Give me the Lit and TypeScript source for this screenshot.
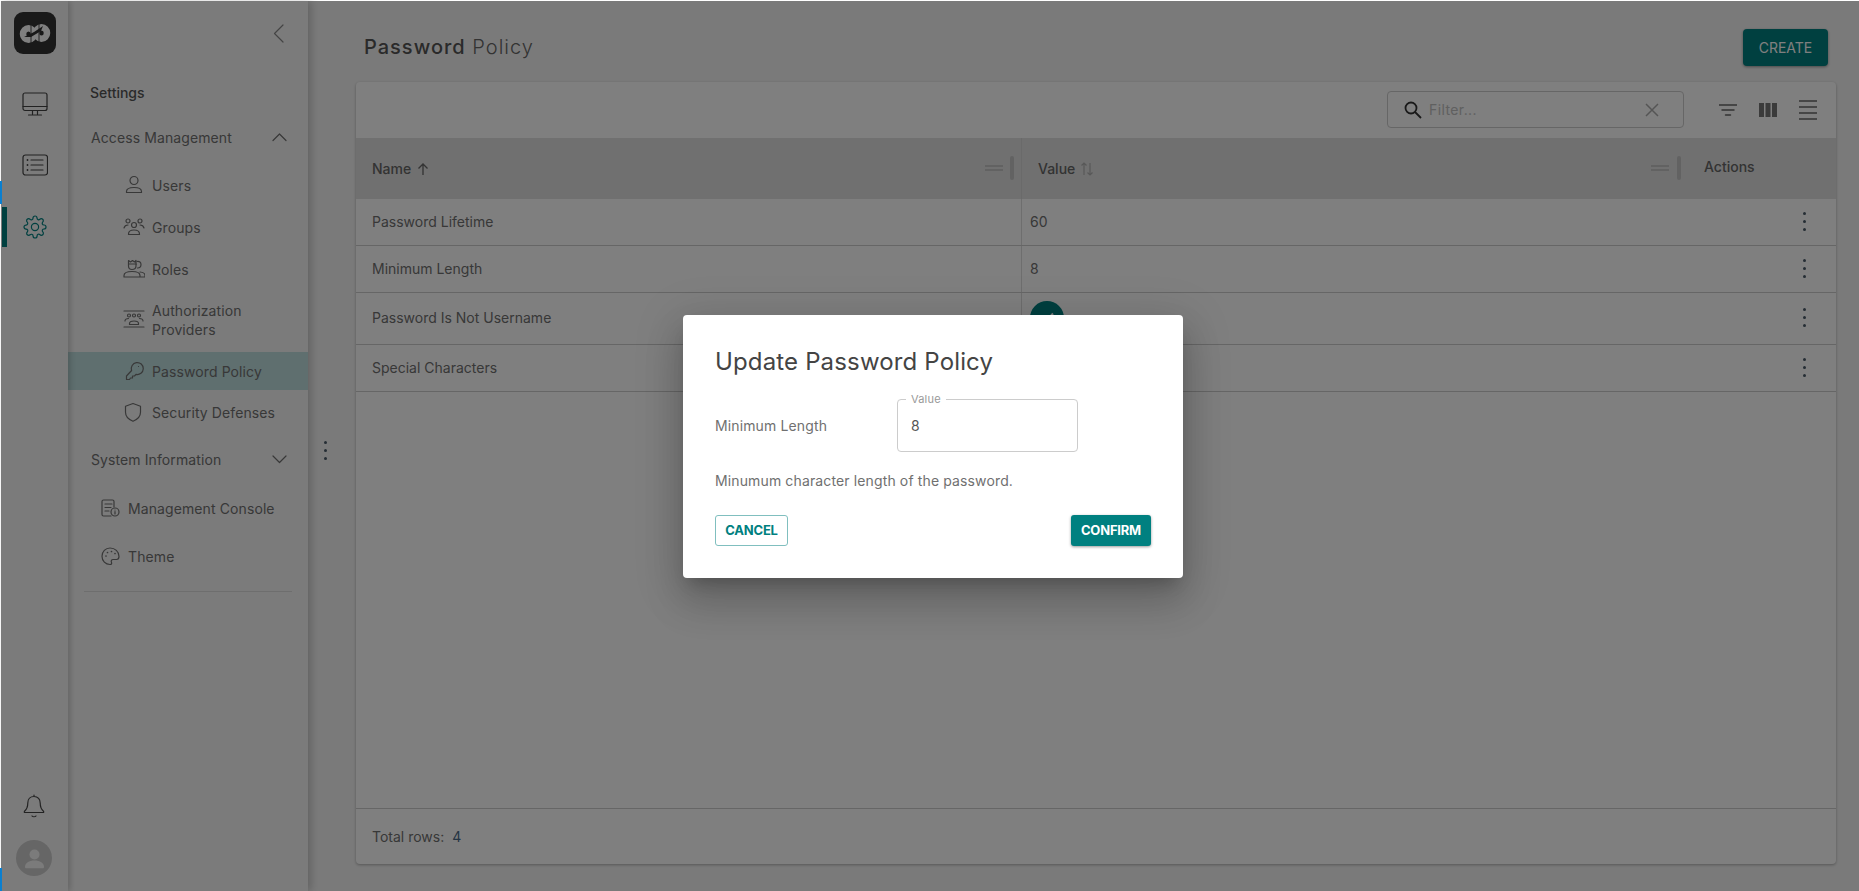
import { LitElement, html, css, svg } from 'lit'
import { customElement } from 'lit/decorators.js'

const line = (body: unknown, w = 24, h = 24, cls = '') => html`<svg class="ico ${cls}" width=${w} height=${h} viewBox="0 0 ${w} ${h}" fill="none" stroke="currentColor" stroke-width="1.2" stroke-linecap="round" stroke-linejoin="round">${body}</svg>`

const gear = svg`<circle cx="12" cy="12" r="3.6"/><path d="M19.4 15a1.65 1.65 0 0 0 .33 1.82l.06.06a2 2 0 0 1 0 2.83 2 2 0 0 1-2.83 0l-.06-.06a1.65 1.65 0 0 0-1.82-.33 1.65 1.65 0 0 0-1 1.51V21a2 2 0 0 1-2 2 2 2 0 0 1-2-2v-.09A1.65 1.65 0 0 0 9 19.4a1.65 1.65 0 0 0-1.82.33l-.06.06a2 2 0 0 1-2.83 0 2 2 0 0 1 0-2.83l.06-.06a1.65 1.65 0 0 0 .33-1.82 1.65 1.65 0 0 0-1.51-1H3a2 2 0 0 1-2-2 2 2 0 0 1 2-2h.09A1.65 1.65 0 0 0 4.6 9a1.65 1.65 0 0 0-.33-1.82l-.06-.06a2 2 0 0 1 0-2.83 2 2 0 0 1 2.83 0l.06.06a1.65 1.65 0 0 0 1.82.33H9a1.65 1.65 0 0 0 1-1.51V3a2 2 0 0 1 2-2 2 2 0 0 1 2 2v.09a1.65 1.65 0 0 0 1 1.51 1.65 1.65 0 0 0 1.82-.33l.06-.06a2 2 0 0 1 2.83 0 2 2 0 0 1 0 2.83l-.06.06a1.65 1.65 0 0 0-.33 1.82V9a1.65 1.65 0 0 0 1.51 1H21a2 2 0 0 1 2 2 2 2 0 0 1-2 2h-.09a1.65 1.65 0 0 0-1.51 1z"/>`

const monitor = svg`<rect x="1" y="1" width="24" height="17.5" rx="2"/><path d="M1 14.5h24M10.5 18.5v3.5M15.5 18.5v3.5M6.5 23h13"/>`
const list = svg`<rect x="1" y="1" width="24.5" height="20" rx="2.5"/><path d="M9 6h12M9 11h12M9 16h12"/><path stroke-width="1.8" d="M5.5 6h.01M5.5 11h.01M5.5 16h.01"/>`
const bell = svg`<path d="M11 1v1.5M11 2.5c-4 0-6.2 3-6.2 6.5 0 4.2-1 6.300-3.300 8.300-.6.6-.2 1.200.5 1.200h18c.7 0 1.100-.6.5-1.200-2.300-2-3.300-4.100-3.300-8.300 0-3.500-2.200-6.500-6.200-6.500zM9 22c.8 1 3.200 1 4 0"/>`

const user = svg`<circle cx="11" cy="5.500" r="4"/><path d="M3.500 17.500v-1c0-2.500 2.500-4 7.500-4s7.500 1.500 7.500 4v1z"/>`
const groups = svg`<circle cx="5" cy="4" r="2"/><circle cx="17" cy="4" r="2"/><circle cx="11" cy="8" r="2.500"/><path d="M1 11c.5-2 2-3 4-3M21 11c-.5-2-2-3-4-3M5.500 17.500v-.5c0-2.500 2-4 5.500-4s5.500 1.500 5.500 4v.5z"/>`
const roles = svg`<path d="M5.500 1.500l2 1.500 2-1.500 2 1.500 1.500-1.500V7c0 2-1.500 3.500-4 3.500S5.500 9 5.500 7zM5.500 5h8"/><path d="M14 2.500c2.500-.5 4 1 4 3s-1.500 3.500-3.500 3.500M1 18v-1.500c0-2.500 3-4 8-4s8 1.500 8 4V18zM17 13c3 .2 5 1.500 5 3.500V18h-5"/>`
const auth = svg`<path d="M1 1h20M1 17h20"/><circle cx="6" cy="5.500" r="1.500"/><circle cx="11" cy="5.500" r="1.500"/><circle cx="16" cy="5.500" r="1.500"/><path d="M2 11c0-1.500 1.500-2.500 3.500-2.500M20 11c0-1.500-1.500-2.500-3.500-2.500M6.500 14.500v-1c0-1.500 2-2.500 4.500-2.500s4.500 1 4.500 2.500v1z"/>`
const key = svg`<path d="M8.600 9.500A6 6 0 1 1 13 13.400L11.500 15H9.500v2H7.500l-1 1.500H3.500V15zM15.500 5.500h.01"/>`
const shield = svg`<path d="M10 1.500l7.500 2.800v6c0 4.200-3 7.200-7.500 9-4.500-1.800-7.500-4.800-7.500-9v-6z"/>`
const docInfo = svg`<path d="M11 17H3.500c-1 0-1.500-.5-1.500-1.500V2.500C2 1.500 2.500 1 3.500 1h9c1 0 1.500.5 1.500 1.500V8M5 5h7M5 8.500h6M5 12h4"/><circle cx="15" cy="13" r="4"/><path d="M15 12.500v2.500M15 11h.01"/>`
const palette = svg`<path d="M9 1C4.500 1 1 4.700 1 9.300 1 14 4.500 17.500 9 17.500c1.500 0 2-1 1.500-2-.7-1.300-.1-3 1.500-3h3.500c1.500 0 2.500-1.200 2.500-3C18 4.500 14 1 9 1z"/><path stroke-width="1.700" d="M5 9h.01M6.500 5.500h.01M10.500 4.500h.01M14 6.500h.01"/>`

const bars = (y: number[], x1: number[], x2: number[]) => svg`${y.map((v, i) => svg`<path d="M${x1[i]} ${v}H${x2[i]}"/>`)}`

type Item = { label: string[]; icon: unknown; on?: boolean }

const accessItems: Item[] = [
  { label: ['Users'], icon: user },
  { label: ['Groups'], icon: groups },
  { label: ['Roles'], icon: roles },
  { label: ['Authorization', 'Providers'], icon: auth },
  { label: ['Password Policy'], icon: key, on: true },
  { label: ['Security Defenses'], icon: shield },
]

const rows = [
  { name: 'Password Lifetime', value: '60' },
  { name: 'Minimum Length', value: '8' },
  { name: 'Password Is Not Username', check: true },
  { name: 'Special Characters', value: '' },
]

const kebab = html`<span class="kebab"><i></i><i></i><i></i></span>`

@customElement('app-root')
export class AppRoot extends LitElement {
  static styles = css`
    :host {
      display: block;
      height: 100vh;
      overflow: hidden;
      font-family: Inter, "Liberation Sans", sans-serif;
      color: #666;
      background: #fff;
    }
    * { box-sizing: border-box; }
    .frame { position: relative; display: flex; height: 100%; padding: 1px 0 0 1px; }
    .edge { position: absolute; left: 0; width: 2px; background: #0a7fd0; z-index: 11; }
    .edge.a { top: 181px; height: 23px; }
    .edge.b { top: 868px; height: 23px; }
    .ico { display: block; flex: none; }

    .rail {
      flex: none;
      width: 67px;
      display: flex;
      flex-direction: column;
      align-items: center;
      padding-top: 11px;
      background: #f7f7f7;
      box-shadow: 2px 0 6px rgba(0,0,0,.2);
      z-index: 3;
      color: #444;
    }
    .logo { width: 42px; height: 42px; border-radius: 9px; background: #333; }
    .logo svg { display: block; }
    .rail-btn { position: relative; width: 67px; display: flex; justify-content: center; }
    .rail-btn.monitor { margin-top: 38px; }
    .rail-btn.list { margin-top: 38px; }
    .rail-btn.gear { margin-top: 39px; color: #008080; }
    .rail-btn.gear::before {
      content: '';
      position: absolute;
      left: 1px;
      top: -8px;
      width: 5px;
      height: 40px;
      background: #008080;
    }
    .spacer { flex: 1; }
    .bell { margin-bottom: 22px; padding-right: 2px; }
    .avatar { width: 36px; height: 36px; margin-bottom: 15px; margin-right: 2px; border-radius: 50%; background: #ccc; overflow: hidden; }

    .nav {
      flex: none;
      width: 240px;
      background: #f7f7f7;
      box-shadow: 3px 0 8px rgba(0,0,0,.2);
      z-index: 2;
      position: relative;
      color: #707070;
      font-size: 14px;
      letter-spacing: .1px;
    }
    .collapse { position: absolute; right: 23px; top: 23px; color: #888; }
    .handle { position: absolute; right: -19px; top: 440px; }
    .settings { padding: 82px 0 0 22px; font-weight: 500; line-height: 20px; color: #555; letter-spacing: 0; height: 118px; }
    .group { display: flex; align-items: center; justify-content: space-between; height: 36px; padding: 0 21px 0 23px; }
    .items { display: flex; flex-direction: column; gap: 4px; padding-top: 11px; }
    .item { display: flex; align-items: center; min-height: 38px; padding-left: 55px; gap: 7px; line-height: 19px; }
    .item .slot { width: 22px; display: flex; justify-content: center; flex: none; }
    .item.on { background: #bedede; margin-bottom: -1px; }
    .item.tall { height: 56px; }
    .group.second { margin-top: 10px; }
    .plain { display: flex; align-items: center; height: 38px; padding-left: 32px; gap: 8px; }
    .plain .slot { width: 20px; flex: none; display: flex; justify-content: center; }
    .plain-list { display: flex; flex-direction: column; gap: 9px; padding-top: 12px; }
    .plain:last-child { margin-top: 1px; }
    .divider { height: 1px; background: #ddd; margin: 16px 16px 0; }

    .main { flex: 1; min-width: 0; display: flex; flex-direction: column; padding: 0 23px 27px 48px; background: #f5f5f5; }
    .head { flex: none; height: 81px; display: flex; align-items: center; justify-content: space-between; padding: 12px 8px 0 8px; }
    .title { font-size: 20px; letter-spacing: 1px; font-weight: 300; color: #666; margin-bottom: 2px; }
    .title b { font-weight: 500; color: #555; }
    .create {
      width: 85px;
      height: 37px;
      border: 0;
      border-radius: 4px;
      background: #008080;
      color: #fff;
      font: 400 14px Inter, sans-serif;
      box-shadow: 0 1px 3px rgba(0,0,0,.4);
    }

    .card { flex: 1; display: flex; flex-direction: column; background: #fff; border-radius: 4px; box-shadow: 0 1px 3px rgba(0,0,0,.3); font-size: 14px; }
    .bar { flex: none; height: 56px; padding-bottom: 1px; display: flex; align-items: center; }
    .filter {
      margin-left: 1031px;
      width: 297px;
      height: 37px;
      display: flex;
      align-items: center;
      padding-left: 16px;
      border: 1px solid #ccc;
      border-radius: 4px;
      color: #c0c0c0;
      gap: 7px;
    }
    .filter .txt { flex: 1; letter-spacing: .4px; }
    .filter .x { margin-right: 24px; color: #aaa; }
    .tools { display: flex; align-items: center; color: #666; }
    .tool { width: 40px; display: flex; justify-content: center; }
    .tool .ico { stroke-width: 1.5; }
    .tools .tool:first-child { margin-left: 24px; }

    .thead, .tr { display: grid; grid-template-columns: 666px 665px 1fr; }
    .thead { flex: none; height: 61px; background: #e0e0e0; font-weight: 500; color: #666; }
    .th { display: flex; align-items: center; padding-left: 16px; position: relative; }
    .th:first-child { border-right: 1px solid #d4d4d4; }
    .th.act { padding-left: 17px; padding-bottom: 4px; align-items: center; }
    .sort { margin-left: 5px; color: #666; }
    .sort.off { color: #b0b0b0; }
    .grip { position: absolute; right: 18px; top: 27px; width: 18px; height: 6px; border-top: 2px solid #c4c4c4; border-bottom: 2px solid #c4c4c4; }
    .sep { position: absolute; right: 7px; top: 18px; width: 4px; height: 24px; border-radius: 2px; background: #c4c4c4; }
    .th.val .grip { right: 18px; }
    .th.val .sep { right: 6px; }
    .tr { border-bottom: 1px solid #ccc; min-height: 47px; align-items: stretch; color: #707070; }
    .td { display: flex; align-items: center; padding: 0 0 2px 16px; }
    .td:first-child { border-right: 1px solid #ddd; }
    .td.v { padding-left: 8px; }
    .td.a { justify-content: flex-end; padding-right: 30px; }
    .check { width: 34px; height: 34px; margin: 8px 0 7px; border-radius: 50%; background: #008080; display: flex; align-items: center; justify-content: center; color: #fff; }
    .kebab { display: flex; flex-direction: column; gap: 5px; }
    .kebab i { width: 3px; height: 3px; border-radius: 50%; background: #4a5a68; }
    .fill { flex: 1; }
    .foot { flex: none; height: 56px; display: flex; align-items: center; padding-left: 16px; border-top: 1px solid #ccc; color: #707070; gap: 8px; }
    .foot b { font-weight: 400; color: #4a6a88; }

    .overlay { position: absolute; inset: 1px 0 0 1px; z-index: 10; background: rgba(0,0,0,.5); display: flex; align-items: center; justify-content: center; padding-left: 6px; }
    .dialog {
      width: 500px;
      height: 263px;
      padding: 32px;
      background: #fff;
      border-radius: 4px;
      box-shadow: 0 11px 15px -7px rgba(0,0,0,.2), 0 24px 38px 3px rgba(0,0,0,.14), 0 9px 46px 8px rgba(0,0,0,.12);
      color: #707070;
      font-size: 14px;
      letter-spacing: .13px;
    }
    h2 { margin: 0; font-size: 24px; line-height: 29px; font-weight: 400; letter-spacing: .15px; color: #444; }
    .row { display: flex; align-items: center; margin-top: 23px; }
    .row .lbl { width: 182px; flex: none; }
    .field { position: relative; width: 181px; height: 53px; border: 1px solid #ccc; border-radius: 4px; display: flex; align-items: center; padding-left: 13px; color: #555; }
    .legend { position: absolute; left: 8px; top: -7px; padding: 0 5px; background: #fff; font-size: 11px; line-height: 13px; color: #999; letter-spacing: .2px; }
    .help { margin: 19px 0 0; line-height: 20px; }
    .actions { display: flex; justify-content: space-between; margin-top: 24px; }
    .btn { height: 31px; border-radius: 3px; font: 700 13px Inter, sans-serif; letter-spacing: -.2px; padding: 0; }
    .btn.cancel { width: 73px; background: #fff; color: #008080; border: 1px solid #80bfbf; }
    .btn.confirm { width: 80px; background: #008080; color: #fff; border: 0; box-shadow: 0 1px 3px rgba(0,0,0,.4); }
  `

  render() {
    return html`
      <div class="frame">
        <div class="edge a"></div>
        <div class="edge b"></div>
        <aside class="rail">
          <div class="logo">
            <svg width="42" height="42" viewBox="0 0 42 42" fill="none">
              <ellipse cx="14.500" cy="22" rx="5.500" ry="5.800" stroke="#fff" stroke-width="6.500"/>
              <ellipse cx="27.500" cy="21" rx="5.500" ry="5.800" stroke="#fff" stroke-width="6.500"/>
              <path d="M10 25L20 20l9-6-2 5-10 6z" fill="#333"/>
              <path d="M17 13v19M25 12v18" stroke="#333" stroke-width=".9"/>
            </svg>
          </div>
          <div class="rail-btn monitor">${line(monitor, 26, 24)}</div>
          <div class="rail-btn list">${line(list, 26, 22)}</div>
          <div class="rail-btn gear">${line(gear, 24, 24)}</div>
          <div class="spacer"></div>
          <div class="bell">${line(bell, 22, 24)}</div>
          <div class="avatar">
            <svg width="36" height="36" viewBox="0 0 36 36" fill="#f7f7f7"><circle cx="18.500" cy="14.500" r="5"/><path d="M9 27c0-4 4-6.500 9.500-6.500S28 23 28 27c0 .8-.6 1.300-1.500 1.300h-16C9.600 28.300 9 27.800 9 27z"/></svg>
          </div>
        </aside>

        <nav class="nav">
          <div class="collapse">${line(svg`<path d="M10 1L1.500 9.500 10 18"/>`, 12, 19)}</div>
          <div class="handle"><span class="kebab"><i></i><i></i><i></i></span></div>
          <div class="settings">Settings</div>
          <div class="group">
            <span>Access Management</span>
            ${line(svg`<path d="M1 8.500L7.500 2 14 8.500"/>`, 15, 10)}
          </div>
          <div class="items">
            ${accessItems.map(it => html`
              <div class="item ${it.on ? 'on' : ''} ${it.label.length > 1 ? 'tall' : ''}">
                <span class="slot">${line(it.icon, 22, 20)}</span>
                <span>${it.label.map(t => html`${t}<br>`)}</span>
              </div>`)}
          </div>
          <div class="group second">
            <span>System Information</span>
            ${line(svg`<path d="M1 2l6.500 6.500L14 2"/>`, 15, 10)}
          </div>
          <div class="plain-list">
            <div class="plain"><span class="slot">${line(docInfo, 20, 18)}</span>Management Console</div>
            <div class="plain"><span class="slot">${line(palette, 19, 19)}</span>Theme</div>
          </div>
          <div class="divider"></div>
        </nav>

        <main class="main">
          <div class="head">
            <div class="title"><b>Password</b> Policy</div>
            <button class="create">CREATE</button>
          </div>
          <section class="card">
            <div class="bar">
              <div class="filter">
                <svg class="ico" width="18" height="18" viewBox="0 0 18 18" fill="none" stroke="#333" stroke-width="1.800"><circle cx="7" cy="7" r="5.500"/><path d="M11 11l6 6"/></svg>
                <span class="txt">Filter...</span>
                <svg class="ico x" width="14" height="14" viewBox="0 0 14 14" fill="none" stroke="currentColor" stroke-width="1.500"><path d="M1 1l12 12M13 1L1 13"/></svg>
              </div>
              <div class="tools">
                <span class="tool">${line(bars([1, 6, 11], [0, 3, 6.500], [18, 15, 11.500]), 18, 12)}</span>
                <span class="tool"><svg class="ico" width="18" height="14" viewBox="0 0 18 14" fill="#777"><path d="M0 0h5v14H0zM6.500 0h5v14h-5zM13 0h5v14h-5z"/></svg></span>
                <span class="tool">${line(bars([1, 7, 13, 19], [0, 0, 0, 0], [18, 18, 18, 18]), 18, 20)}</span>
              </div>
            </div>
            <div class="thead">
              <div class="th">Name
                <svg class="ico sort" width="14" height="14" viewBox="0 0 14 14" fill="none" stroke="currentColor" stroke-width="1.300"><path d="M7 13V2M2.500 6.500L7 2l4.500 4.500"/></svg>
                <span class="grip"></span><span class="sep"></span>
              </div>
              <div class="th val">Value
                <svg class="ico sort off" width="14" height="14" viewBox="0 0 14 14" fill="none" stroke="currentColor" stroke-width="1.200"><path d="M4 13V1M1.500 3.500L4 1l2.500 2.500M10 1v12M7.500 10.500L10 13l2.500-2.500"/></svg>
                <span class="grip"></span><span class="sep"></span>
              </div>
              <div class="th act">Actions</div>
            </div>
            ${rows.map(r => html`
              <div class="tr">
                <div class="td">${r.name}</div>
                <div class="td v">
                  ${r.check
                    ? html`<span class="check"><svg width="20" height="20" viewBox="0 0 20 20" fill="none" stroke="currentColor" stroke-width="2"><path d="M4 10.500l4 4 8-9"/></svg></span>`
                    : r.value}
                </div>
                <div class="td a">${kebab}</div>
              </div>`)}
            <div class="fill"></div>
            <div class="foot"><span>Total rows:</span><b>4</b></div>
          </section>
        </main>

        <div class="overlay">
          <div class="dialog">
            <h2>Update Password Policy</h2>
            <div class="row">
              <span class="lbl">Minimum Length</span>
              <div class="field"><span class="legend">Value</span>8</div>
            </div>
            <p class="help">Minumum character length of the password.</p>
            <div class="actions">
              <button class="btn cancel">CANCEL</button>
              <button class="btn confirm">CONFIRM</button>
            </div>
          </div>
        </div>
      </div>
    `
  }
}

declare global {
  interface HTMLElementTagNameMap {
    'app-root': AppRoot
  }
}
